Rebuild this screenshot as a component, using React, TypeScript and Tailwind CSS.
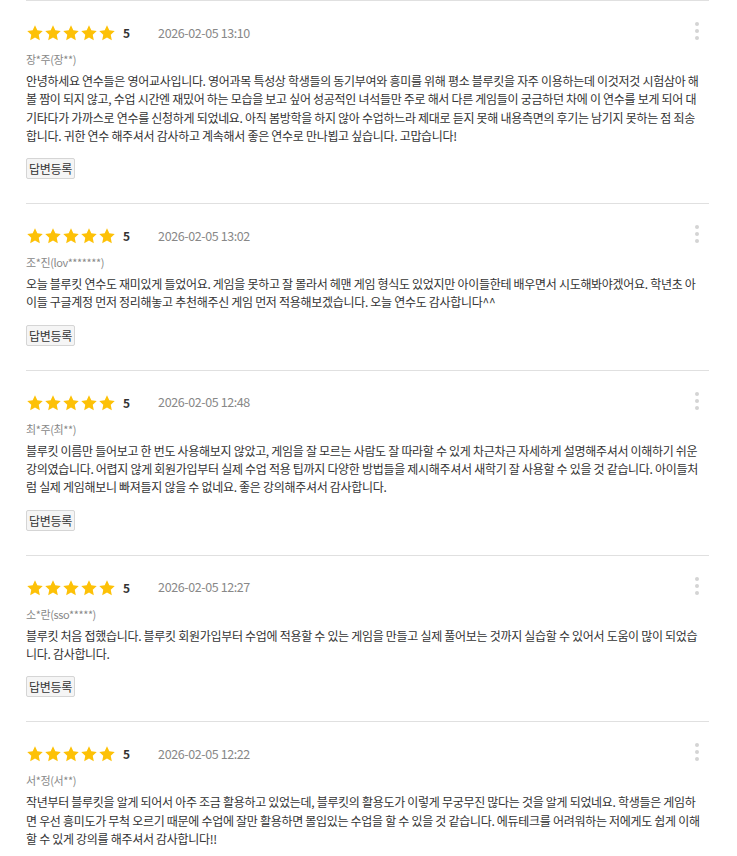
import React from "react";

const reviews = [
  {
    date: "2026-02-05 13:10",
    name: "장*주(장**)",
    text: "안녕하세요 연수들은 영어교사입니다. 영어과목 특성상 학생들의 동기부여와 흥미를 위해 평소 블루킷을 자주 이용하는데 이것저것 시험삼아 해볼 짬이 되지 않고, 수업 시간엔 재밌어 하는 모습을 보고 싶어 성공적인 녀석들만 주로 해서 다른 게임들이 궁금하던 차에 이 연수를 보게 되어 대기타다가 가까스로 연수를 신청하게 되었네요. 아직 봄방학을 하지 않아 수업하느라 제대로 듣지 못해 내용측면의 후기는 남기지 못하는 점 죄송합니다. 귀한 연수 해주셔서 감사하고 계속해서 좋은 연수로 만나뵙고 싶습니다. 고맙습니다!",
  },
  {
    date: "2026-02-05 13:02",
    name: "조*진(lov*******)",
    text: "오늘 블루킷 연수도 재미있게 들었어요. 게임을 못하고 잘 몰라서 헤맨 게임 형식도 있었지만 아이들한테 배우면서 시도해봐야겠어요. 학년초 아이들 구글계정 먼저 정리해놓고 추천해주신 게임 먼저 적용해보겠습니다. 오늘 연수도 감사합니다^^",
  },
  {
    date: "2026-02-05 12:48",
    name: "최*주(최**)",
    text: "블루킷 이름만 들어보고 한 번도 사용해보지 않았고, 게임을 잘 모르는 사람도 잘 따라할 수 있게 차근차근 자세하게 설명해주셔서 이해하기 쉬운 강의였습니다. 어렵지 않게 회원가입부터 실제 수업 적용 팁까지 다양한 방법들을 제시해주셔서 새학기 잘 사용할 수 있을 것 같습니다. 아이들처럼 실제 게임해보니 빠져들지 않을 수 없네요. 좋은 강의해주셔서 감사합니다.",
  },
  {
    date: "2026-02-05 12:27",
    name: "소*란(sso*****)",
    text: "블루킷 처음 접했습니다. 블루킷 회원가입부터 수업에 적용할 수 있는 게임을 만들고 실제 풀어보는 것까지 실습할 수 있어서 도움이 많이 되었습니다. 감사합니다.",
  },
  {
    date: "2026-02-05 12:22",
    name: "서*정(서**)",
    text: "작년부터 블루킷을 알게 되어서 아주 조금 활용하고 있었는데, 블루킷의 활용도가 이렇게 무궁무진 많다는 것을 알게 되었네요. 학생들은 게임하면 우선 흥미도가 무척 오르기 때문에 수업에 잘만 활용하면 몰입있는 수업을 할 수 있을 것 같습니다. 에듀테크를 어려워하는 저에게도 쉽게 이해할 수 있게 강의를 해주셔서 감사합니다!!",
    noButton: true,
  },
];

function Star() {
  return (
    <svg width="18" height="18" viewBox="0 0 24 24" className="block">
      <path
        d="M12 1.8l3.1 6.6 7.2.9-5.3 5 1.4 7.2L12 18l-6.4 3.5 1.4-7.2-5.3-5 7.2-.9z"
        fill="#fdc107"
      />
    </svg>
  );
}

export default function App() {
  return (
    <div
      className="bg-white min-h-screen px-[26px]"
      style={{ fontFamily: '"Noto Sans CJK KR", "Noto Sans", sans-serif' }}
    >
      <div className="w-[683px]">
        {reviews.map((r, i) => (
          <div key={i} className="border-t border-[#e0e0e0] pt-[22px] pb-[24px] relative">
            <div className="absolute right-[10px] top-[21px] flex flex-col gap-[3px]">
              <span className="w-[4px] h-[4px] rounded-full bg-[#d4d4d4]" />
              <span className="w-[4px] h-[4px] rounded-full bg-[#d4d4d4]" />
              <span className="w-[4px] h-[4px] rounded-full bg-[#d4d4d4]" />
            </div>
            <div className="flex items-center h-[20px]">
              <div className="flex">
                <Star />
                <Star />
                <Star />
                <Star />
                <Star />
              </div>
              <span className="ml-[7px] text-[12px] font-bold text-[#333]">5</span>
              <span className="ml-[28px] text-[12.5px] text-[#888] tracking-[-0.4px]">{r.date}</span>
            </div>
            <div className="mt-[8px] text-[11px] text-[#888] leading-[16px] tracking-[-0.4px]">{r.name}</div>
            <p className="mt-[5px] text-[12px] leading-[18.3px] text-[#333] tracking-[-0.3px] pr-[4px]">{r.text}</p>
            {!r.noButton && (
              <button className="mt-[13px] block h-[21px] px-[2px] text-[12px] leading-[19px] text-[#333] bg-[#f5f5f5] border border-[#d5d5d5] rounded-[2px] tracking-[-0.3px]">
                답변등록
              </button>
            )}
          </div>
        ))}
      </div>
    </div>
  );
}
